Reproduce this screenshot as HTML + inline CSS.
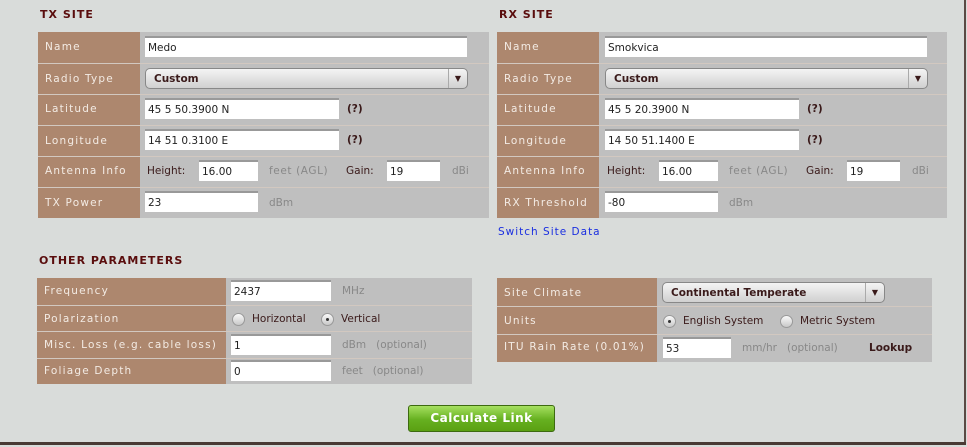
<!DOCTYPE html><html><head><style>
body{margin:0;width:967px;height:447px;background:#d9dcda;position:relative;overflow:hidden;font-family:"DejaVu Sans","Liberation Sans",sans-serif;font-size:10.5px;color:#3a1a1a}
.a{position:absolute}
.h{position:absolute;font-weight:bold;font-size:11px;letter-spacing:1px;color:#5a0d0d}
.t{position:absolute;background:#bfbfbf}
.l{position:absolute;left:0;background:#ad876e}
.r{position:absolute;left:0;right:0;border-top:1px solid #d2c8c0;height:0}
.lb{position:absolute;color:#f3ebe4;letter-spacing:1.2px;font-size:10.5px;margin-top:1px}
.in{position:absolute;background:#fff;border-top:2px solid #999;box-sizing:border-box;padding:4px 0 0 3px;color:#222;font-size:10.5px;height:21px}
.sel{position:absolute;background:linear-gradient(#f4f4f4,#d0d0d0);border:1px solid #888;border-radius:5px;box-sizing:border-box;height:21px;font-weight:bold;padding:4px 0 0 8px;color:#3a1a1a}
.sel:after{content:"▼";position:absolute;right:0;top:0;width:18px;height:19px;border-left:1px solid #aaa;text-align:center;font-size:8px;line-height:19px}
.u{position:absolute;color:#888;margin-top:1px}
.rd{position:absolute;width:13px;height:13px;border-radius:50%;background:linear-gradient(#fafafa,#c8c8c8);border:1px solid #999;box-sizing:border-box;margin-top:1px}
.rd.on:after{content:"";position:absolute;left:4px;top:4px;width:3px;height:3px;border-radius:50%;background:#333}
</style></head><body>
<div class="a" style="right:1px;top:0;width:2px;height:445px;background:#5a4a44"></div>
<div class="a" style="left:0;top:442px;width:966px;height:3px;background:#4a3a34"></div>

<div class="h" style="left:40px;top:8px">TX SITE</div>
<div class="h" style="left:499px;top:8px">RX SITE</div>

<!-- TX -->
<div class="t" style="left:38px;top:32px;width:451px;height:186px">
<div class="l" style="top:0;width:102px;height:186px"></div>
<div class="r" style="top:31px"></div><div class="r" style="top:62px"></div><div class="r" style="top:93px"></div><div class="r" style="top:124px"></div><div class="r" style="top:155px"></div>
<div class="lb" style="left:7px;top:8px">Name</div>
<div class="lb" style="left:7px;top:40px">Radio Type</div>
<div class="lb" style="left:7px;top:70px">Latitude</div>
<div class="lb" style="left:7px;top:102px">Longitude</div>
<div class="lb" style="left:7px;top:132px">Antenna Info</div>
<div class="lb" style="left:7px;top:164px">TX Power</div>
<div class="in" style="left:107px;top:4px;width:322px">Medo</div>
<div class="sel" style="left:107px;top:36px;width:323px">Custom</div>
<div class="in" style="left:107px;top:66px;width:194px">45 5 50.3900 N</div>
<div class="a" style="left:309px;top:71px;font-weight:bold">(?)</div>
<div class="in" style="left:107px;top:97px;width:194px">14 51 0.3100 E</div>
<div class="a" style="left:309px;top:102px;font-weight:bold">(?)</div>
<div class="a" style="left:109px;top:133px">Height:</div>
<div class="in" style="left:161px;top:128px;width:59px">16.00</div>
<div class="u" style="left:231px;top:132px;letter-spacing:.6px">feet (AGL)</div>
<div class="a" style="left:308px;top:133px">Gain:</div>
<div class="in" style="left:349px;top:128px;width:53px">19</div>
<div class="u" style="left:414px;top:132px">dBi</div>
<div class="in" style="left:107px;top:159px;width:113px">23</div>
<div class="u" style="left:231px;top:164px">dBm</div>
</div>

<!-- RX -->
<div class="t" style="left:497px;top:32px;width:450px;height:186px">
<div class="l" style="top:0;width:102px;height:186px"></div>
<div class="r" style="top:31px"></div><div class="r" style="top:62px"></div><div class="r" style="top:93px"></div><div class="r" style="top:124px"></div><div class="r" style="top:155px"></div>
<div class="lb" style="left:7px;top:8px">Name</div>
<div class="lb" style="left:7px;top:40px">Radio Type</div>
<div class="lb" style="left:7px;top:70px">Latitude</div>
<div class="lb" style="left:7px;top:102px">Longitude</div>
<div class="lb" style="left:7px;top:132px">Antenna Info</div>
<div class="lb" style="left:7px;top:164px">RX Threshold</div>
<div class="in" style="left:108px;top:4px;width:322px">Smokvica</div>
<div class="sel" style="left:108px;top:36px;width:323px">Custom</div>
<div class="in" style="left:108px;top:66px;width:194px">45 5 20.3900 N</div>
<div class="a" style="left:310px;top:71px;font-weight:bold">(?)</div>
<div class="in" style="left:108px;top:97px;width:194px">14 50 51.1400 E</div>
<div class="a" style="left:310px;top:102px;font-weight:bold">(?)</div>
<div class="a" style="left:110px;top:133px">Height:</div>
<div class="in" style="left:162px;top:128px;width:59px">16.00</div>
<div class="u" style="left:232px;top:132px;letter-spacing:.6px">feet (AGL)</div>
<div class="a" style="left:309px;top:133px">Gain:</div>
<div class="in" style="left:350px;top:128px;width:53px">19</div>
<div class="u" style="left:415px;top:132px">dBi</div>
<div class="in" style="left:108px;top:159px;width:113px">-80</div>
<div class="u" style="left:232px;top:164px">dBm</div>
</div>
<div class="a" style="left:498px;top:226px;color:#1a2ee0;letter-spacing:1px">Switch Site Data</div>

<div class="h" style="left:39px;top:254px">OTHER PARAMETERS</div>

<div class="t" style="left:37px;top:278px;width:435px;height:106px">
<div class="l" style="top:0;width:189px;height:106px"></div>
<div class="r" style="top:27px"></div><div class="r" style="top:53px"></div><div class="r" style="top:80px"></div>
<div class="lb" style="left:7px;top:6px">Frequency</div>
<div class="lb" style="left:7px;top:34px">Polarization</div>
<div class="lb" style="left:7px;top:60px">Misc. Loss (e.g. cable loss)</div>
<div class="lb" style="left:7px;top:86px">Foliage Depth</div>
<div class="in" style="left:194px;top:2px;width:100px">2437</div>
<div class="u" style="left:305px;top:6px">MHz</div>
<div class="rd" style="left:195px;top:34px"></div>
<div class="a" style="left:215px;top:35px">Horizontal</div>
<div class="rd on" style="left:284px;top:34px"></div>
<div class="a" style="left:304px;top:35px">Vertical</div>
<div class="in" style="left:194px;top:56px;width:100px">1</div>
<div class="u" style="left:305px;top:60px">dBm &nbsp;&nbsp;(optional)</div>
<div class="in" style="left:194px;top:82px;width:100px">0</div>
<div class="u" style="left:305px;top:86px">feet &nbsp;&nbsp;(optional)</div>
</div>

<div class="t" style="left:497px;top:278px;width:435px;height:84px">
<div class="l" style="top:0;width:160px;height:84px"></div>
<div class="r" style="top:28px"></div><div class="r" style="top:56px"></div>
<div class="lb" style="left:7px;top:8px">Site Climate</div>
<div class="lb" style="left:7px;top:36px">Units</div>
<div class="lb" style="left:7px;top:62px">ITU Rain Rate (0.01%)</div>
<div class="sel" style="left:165px;top:4px;width:223px">Continental Temperate</div>
<div class="rd on" style="left:166px;top:36px"></div>
<div class="a" style="left:186px;top:37px">English System</div>
<div class="rd" style="left:283px;top:36px"></div>
<div class="a" style="left:303px;top:37px">Metric System</div>
<div class="in" style="left:166px;top:59px;width:68px">53</div>
<div class="u" style="left:245px;top:63px">mm/hr &nbsp;&nbsp;(optional)</div>
<div class="a" style="left:372px;top:64px;font-weight:bold">Lookup</div>
</div>

<div class="a" style="left:408px;top:405px;width:147px;height:27px;box-sizing:border-box;border:1px solid #3d6a10;border-radius:3px;background:linear-gradient(#a6e060,#66b020 55%,#5aa012);color:#fff;font-weight:bold;font-size:12px;letter-spacing:.5px;text-align:center;line-height:25px">Calculate Link</div>
</body></html>
